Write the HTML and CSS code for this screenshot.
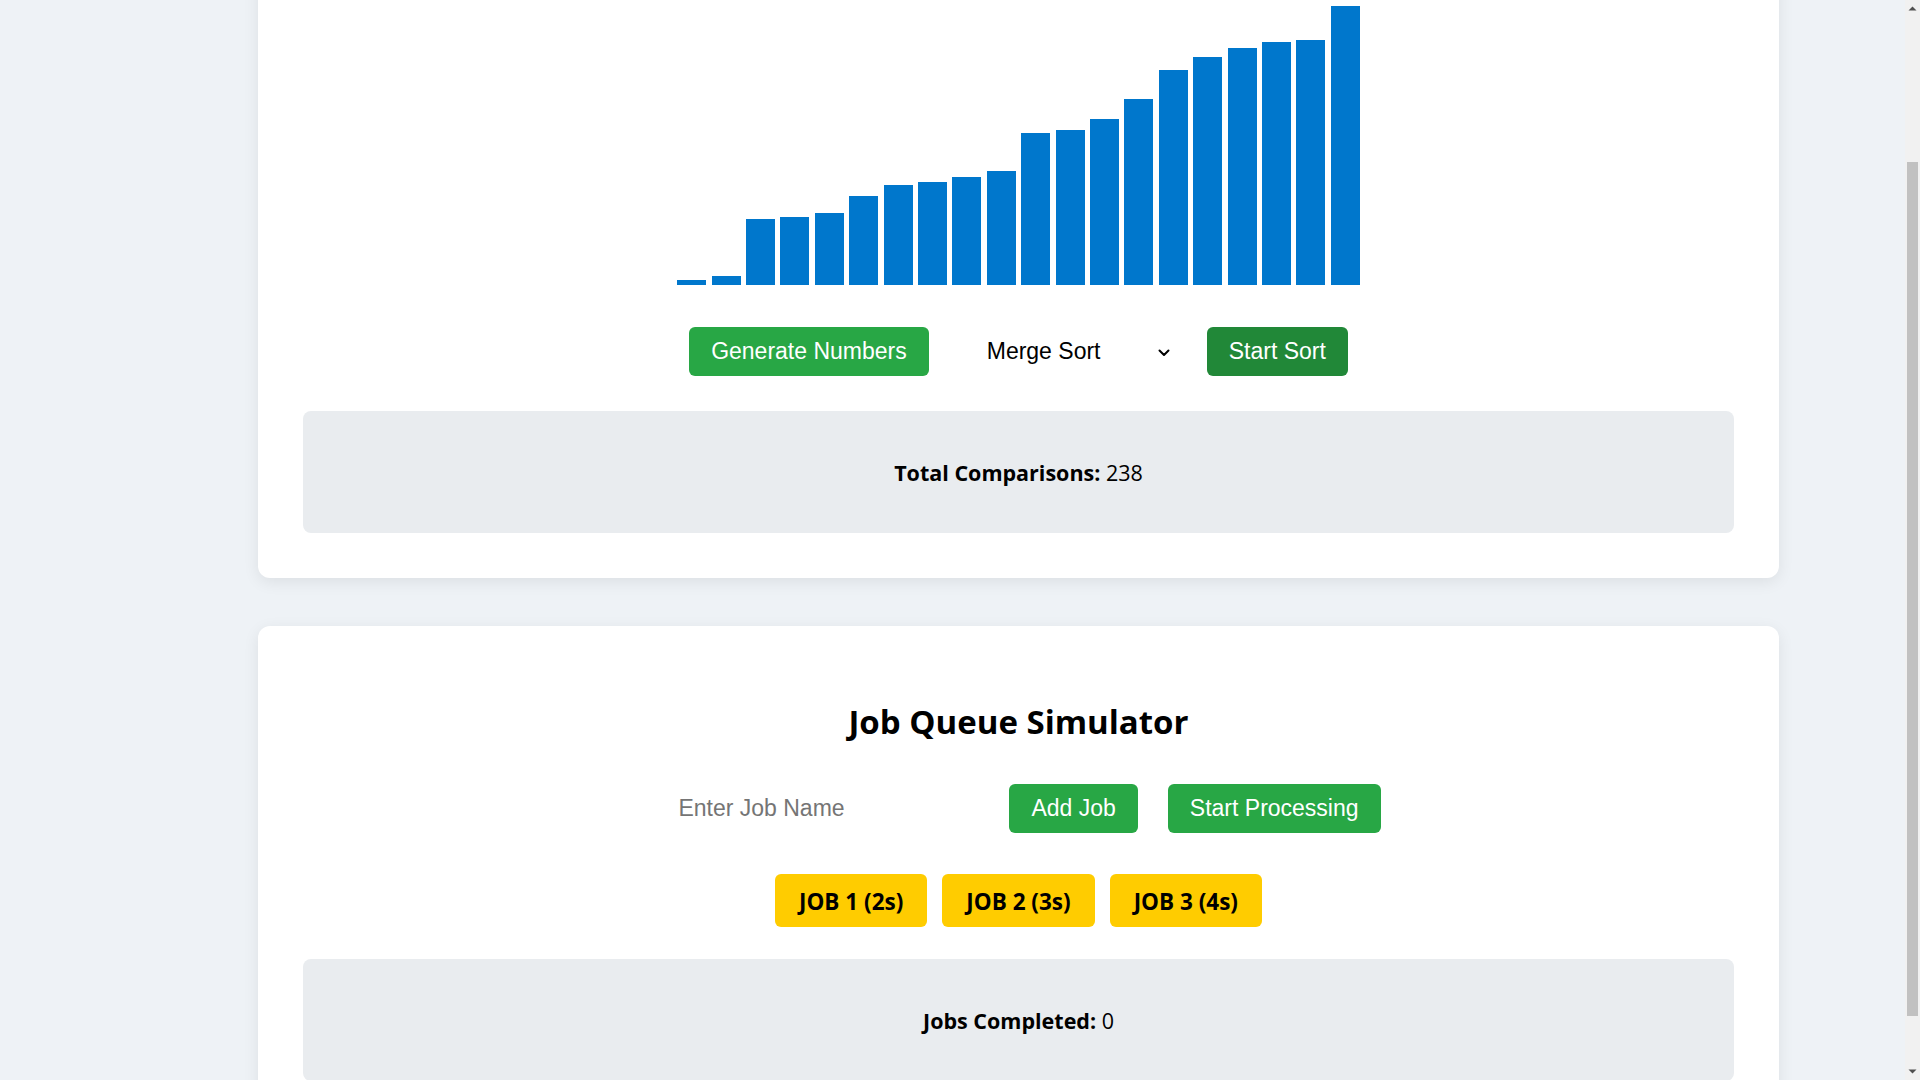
FILE: index.html
```html
<!DOCTYPE html>
<html lang="en">
<head>
<meta charset="utf-8">
<title>Algorithm Playground</title>
<link rel="stylesheet" href="styles.css">
</head>
<body>
<div class="scroller" id="scroller">
<main class="page">
  <section class="card sort-card">
    <div class="chart">
      <div class="bar" style="height:5px"></div>
      <div class="bar" style="height:9px"></div>
      <div class="bar" style="height:66px"></div>
      <div class="bar" style="height:68px"></div>
      <div class="bar" style="height:72px"></div>
      <div class="bar" style="height:89px"></div>
      <div class="bar" style="height:100px"></div>
      <div class="bar" style="height:103px"></div>
      <div class="bar" style="height:108px"></div>
      <div class="bar" style="height:114px"></div>
      <div class="bar" style="height:152px"></div>
      <div class="bar" style="height:155px"></div>
      <div class="bar" style="height:166px"></div>
      <div class="bar" style="height:186px"></div>
      <div class="bar" style="height:215px"></div>
      <div class="bar" style="height:228px"></div>
      <div class="bar" style="height:237px"></div>
      <div class="bar" style="height:243px"></div>
      <div class="bar" style="height:245px"></div>
      <div class="bar" style="height:279px"></div>
    </div>
    <div class="controls">
      <button class="btn" type="button">Generate Numbers</button>
      <span class="select-wrap">
        <select class="algo">
          <option>Merge Sort</option>
          <option>Bubble Sort</option>
          <option>Quick Sort</option>
        </select>
        <svg class="chev" viewBox="0 0 12 8" aria-hidden="true"><path d="M1.5 1.5 L6 6 L10.5 1.5" fill="none" stroke="#000" stroke-width="2" stroke-linecap="round" stroke-linejoin="round"/></svg>
      </span>
      <button class="btn btn-dark" type="button">Start Sort</button>
    </div>
    <div class="stats"><p><strong>Total Comparisons:</strong> 238</p></div>
  </section>

  <section class="card queue-card" id="queue">
    <h2 class="card-title">Job Queue Simulator</h2>
    <div class="controls">
      <input class="job-input" type="text" placeholder="Enter Job Name">
      <button class="btn" type="button">Add Job</button>
      <button class="btn" type="button">Start Processing</button>
    </div>
    <div class="jobs">
      <div class="job">JOB 1 (2s)</div>
      <div class="job">JOB 2 (3s)</div>
      <div class="job">JOB 3 (4s)</div>
    </div>
    <div class="stats"><p><strong>Jobs Completed:</strong> 0</p></div>
  </section>
</main>
</div>
<div class="fake-scrollbar" aria-hidden="true">
  <svg class="sb-arrow sb-up" viewBox="0 0 15 17"><path d="M3.5 10.5 L7.5 6.5 L11.5 10.5 Z" fill="#505050"/></svg>
  <div class="sb-track"><div class="sb-thumb"></div></div>
  <svg class="sb-arrow sb-down" viewBox="0 0 15 17"><path d="M3.5 6.5 L7.5 10.5 L11.5 6.5 Z" fill="#505050"/></svg>
</div>
<script src="script.js"></script>
</body>
</html>
```

FILE: styles.css
```css
html, body {
  margin: 0;
  padding: 0;
  height: 100%;
  overflow: hidden;
}

body {
  background: #eef2f6;
  font-family: "Open Sans", "Noto Sans", sans-serif;
  color: #000;
}

.scroller {
  height: 100vh;
  overflow-y: scroll;
  scrollbar-width: none;
}

.scroller::-webkit-scrollbar {
  display: none;
}

/* browser scrollbar as seen in the capture */
.fake-scrollbar {
  position: fixed;
  top: 0;
  right: 0;
  width: 15px;
  height: 100vh;
  background: #f1f1f1;
  display: flex;
  flex-direction: column;
}

.sb-arrow {
  width: 15px;
  height: 17px;
  flex: none;
}

.sb-track {
  flex: 1;
  padding-top: 145px;
  box-sizing: border-box;
}

.sb-thumb {
  height: 854px;
  margin: 0 2px;
  background: #c1c1c1;
}

.page {
  margin-left: 258px;
  width: 1521px;
  padding: 123px 0 14px;
  display: flex;
  flex-direction: column;
  gap: 48px;
}

.card {
  background: #fff;
  border-radius: 12px;
  box-shadow: 0 4px 16px rgba(0, 0, 0, 0.08);
  padding: 45px;
}

.card-title {
  margin: 29px 0 40px;
  font-size: 33px;
  line-height: 44px;
  font-weight: 700;
  text-align: center;
}

.chart {
  height: 300px;
  display: flex;
  align-items: flex-end;
  justify-content: center;
  gap: 5.4px;
  margin-bottom: 42px;
}

.bar {
  width: 29px;
  background: #0077cc;
}

.controls {
  display: flex;
  justify-content: center;
  align-items: center;
  gap: 30px;
}

.sort-card .controls {
  margin-bottom: 35px;
}

.queue-card .controls {
  margin-bottom: 41px;
}

.btn {
  font-family: "Liberation Sans", Arial, sans-serif;
  font-size: 23px;
  line-height: 27px;
  padding: 11px 22px;
  border: none;
  border-radius: 6px;
  background: #28a745;
  color: #fff;
  cursor: pointer;
}

.btn-dark {
  background: #218838;
}

.select-wrap {
  position: relative;
  display: block;
}

.algo {
  -webkit-appearance: none;
  appearance: none;
  display: block;
  width: 218px;
  border: none;
  border-radius: 6px;
  background: #fff;
  color: #000;
  font-family: "Liberation Sans", Arial, sans-serif;
  font-size: 23px;
  line-height: 27px;
  padding: 11px 40px 11px 28px;
  outline: none;
}

.chev {
  position: absolute;
  right: 7px;
  top: 50%;
  width: 12px;
  height: 8px;
  margin-top: -3px;
  pointer-events: none;
}

.job-input {
  width: 323px;
  box-sizing: border-box;
  border: none;
  outline: none;
  background: #fff;
  color: #000;
  font-family: "Liberation Sans", Arial, sans-serif;
  font-size: 23px;
  line-height: 27px;
  padding: 11px 22px;
}

.job-input::placeholder {
  color: #757575;
}

.jobs {
  display: flex;
  justify-content: center;
  gap: 15px;
  margin-bottom: 32px;
}

.job {
  background: #ffcc00;
  border-radius: 6px;
  padding: 13px 24px 10px;
  font-size: 22.5px;
  line-height: 30px;
  font-weight: 700;
}

.stats {
  background: #e9ecef;
  border-radius: 8px;
  height: 122px;
  box-sizing: border-box;
  padding-top: 1px;
  display: flex;
  align-items: center;
  justify-content: center;
  font-size: 21.5px;
}

.stats p {
  margin: 0;
}
```

FILE: script.js
```js
(function () {
  var scroller = document.getElementById('scroller');
  var queue = document.getElementById('queue');
  function place() {
    scroller.scrollTop = queue.offsetTop - 626;
  }
  place();
  window.addEventListener('load', place);
})();
```
